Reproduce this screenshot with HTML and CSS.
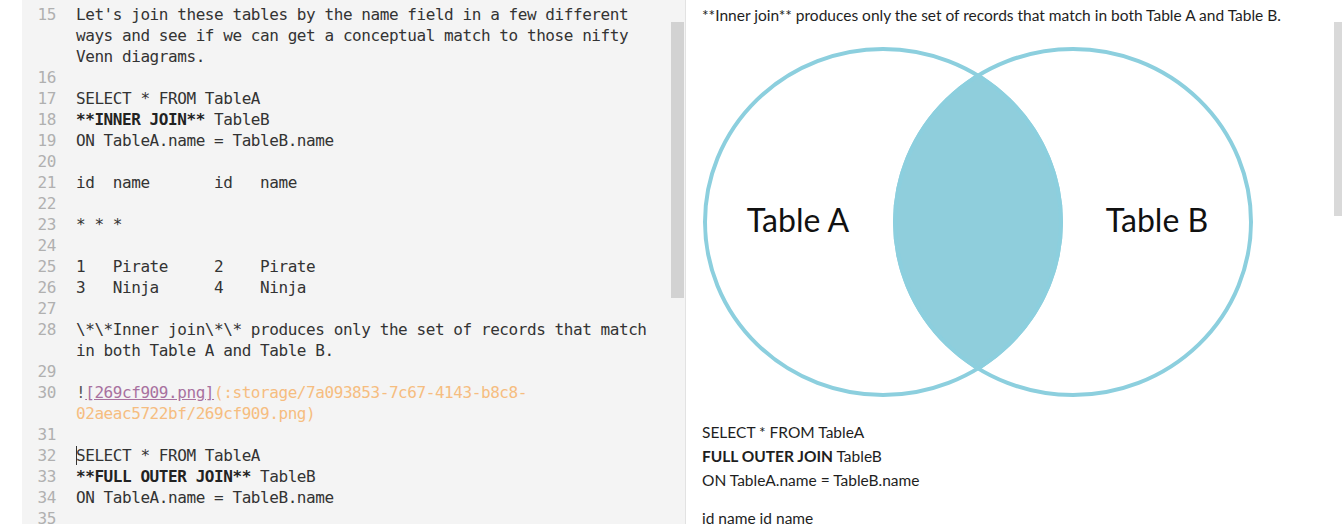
FILE: index.html
```html
<!DOCTYPE html>
<html>
<head>
<meta charset="utf-8">
<link rel="stylesheet" href="styles.css">
</head>
<body>
<div class="app">
  <div class="edge"></div>
  <div class="editor">
    <div class="lines">
      <div class="row"><span class="num">15</span><span class="txt">Let's join these tables by the name field in a few different<br>ways and see if we can get a conceptual match to those nifty<br>Venn diagrams.</span></div>
      <div class="row"><span class="num">16</span><span class="txt"></span></div>
      <div class="row"><span class="num">17</span><span class="txt">SELECT * FROM TableA</span></div>
      <div class="row"><span class="num">18</span><span class="txt"><b>**INNER JOIN**</b> TableB</span></div>
      <div class="row"><span class="num">19</span><span class="txt">ON TableA.name = TableB.name</span></div>
      <div class="row"><span class="num">20</span><span class="txt"></span></div>
      <div class="row"><span class="num">21</span><span class="txt">id  name       id   name</span></div>
      <div class="row"><span class="num">22</span><span class="txt"></span></div>
      <div class="row"><span class="num">23</span><span class="txt">* * *</span></div>
      <div class="row"><span class="num">24</span><span class="txt"></span></div>
      <div class="row"><span class="num">25</span><span class="txt">1   Pirate     2    Pirate</span></div>
      <div class="row"><span class="num">26</span><span class="txt">3   Ninja      4    Ninja</span></div>
      <div class="row"><span class="num">27</span><span class="txt"></span></div>
      <div class="row"><span class="num">28</span><span class="txt">\*\*Inner join\*\* produces only the set of records that match<br>in both Table A and Table B.</span></div>
      <div class="row"><span class="num">29</span><span class="txt"></span></div>
      <div class="row"><span class="num">30</span><span class="txt"><span class="bang">!</span><span class="link">[269cf909.png]</span><span class="url">(:storage/7a093853-7c67-4143-b8c8-<br>02aeac5722bf/269cf909.png)</span></span></div>
      <div class="row"><span class="num">31</span><span class="txt"></span></div>
      <div class="row"><span class="num">32</span><span class="txt"><span class="cursor"></span>SELECT * FROM TableA</span></div>
      <div class="row"><span class="num">33</span><span class="txt"><b>**FULL OUTER JOIN**</b> TableB</span></div>
      <div class="row"><span class="num">34</span><span class="txt">ON TableA.name = TableB.name</span></div>
      <div class="row"><span class="num">35</span><span class="txt"></span></div>
    </div>
    <div class="scroll-thumb editor-thumb"></div>
  </div>
  <div class="preview">
    <p class="p-first">**Inner join** produces only the set of records that match in both Table A and Table B.</p>
    <svg class="venn" width="560" height="370" viewBox="0 0 560 370">
      <defs>
        <clipPath id="clipB">
          <ellipse cx="371" cy="192" rx="180" ry="175"/>
        </clipPath>
      </defs>
      <ellipse cx="181" cy="192" rx="180" ry="175" fill="#8fcedc" clip-path="url(#clipB)"/>
      <ellipse cx="181" cy="192" rx="178" ry="173" fill="none" stroke="#8ccfde" stroke-width="4"/>
      <ellipse cx="371" cy="192" rx="178" ry="173" fill="none" stroke="#8ccfde" stroke-width="4"/>
      <text x="96" y="202" class="venn-label" text-anchor="middle">Table A</text>
      <text x="455" y="202" class="venn-label" text-anchor="middle">Table B</text>
    </svg>
    <p class="p-sql">SELECT * FROM TableA<br><b>FULL OUTER JOIN</b> TableB<br>ON TableA.name = TableB.name</p>
    <p class="p-table">id name id name</p>
    <div class="scroll-thumb preview-thumb"></div>
  </div>
</div>
</body>
</html>
```

FILE: styles.css
```css
html, body {
  margin: 0;
  padding: 0;
  background: #ffffff;
}
.app {
  display: flex;
  width: 1342px;
  height: 524px;
  overflow: hidden;
}
.edge {
  width: 22px;
  flex: none;
  background: #ffffff;
}
.editor {
  position: relative;
  width: 663px;
  flex: none;
  background: #f4f4f4;
  border-right: 1px solid #e2e2e2;
  overflow: hidden;
}
.lines {
  padding-top: 4px;
  font-family: "DejaVu Sans Mono", monospace;
  font-size: 16px;
  letter-spacing: -0.43px;
  line-height: 21px;
  color: #333333;
}
.row {
  display: grid;
  grid-template-columns: 34px 1fr;
  column-gap: 20px;
  min-height: 21px;
}
.num {
  text-align: right;
  color: #b0b0b0;
}
.txt {
  white-space: pre;
  position: relative;
}
.txt b {
  font-weight: bold;
  color: #222222;
}
.bang {
  color: #555555;
}
.link {
  color: #a8719f;
  text-decoration: underline;
}
.url {
  color: #f6bd80;
}
.cursor {
  position: absolute;
  left: 0;
  top: 1px;
  width: 1px;
  height: 19px;
  background: #333333;
}
.scroll-thumb {
  position: absolute;
  top: 22px;
}
.editor-thumb {
  left: 649px;
  width: 13px;
  height: 276px;
  background: #d2d2d2;
}
.preview {
  position: relative;
  flex: 1;
  padding-left: 16px;
  font-family: Lato, "Open Sans", sans-serif;
  font-size: 15.5px;
  line-height: 24px;
  color: #1e1e1e;
}
.preview p {
  margin: 0;
}
.p-first {
  padding-top: 3px;
}
.venn {
  display: block;
  margin-top: 3px;
}
.venn-label {
  font-family: Lato, "Open Sans", sans-serif;
  font-size: 32px;
  fill: #111111;
}
.p-sql {
  margin-top: 20px !important;
}
.p-table {
  margin-top: 14px !important;
}
.preview-thumb {
  right: 0;
  width: 8px;
  height: 194px;
  background: #d9d9d9;
}
```
